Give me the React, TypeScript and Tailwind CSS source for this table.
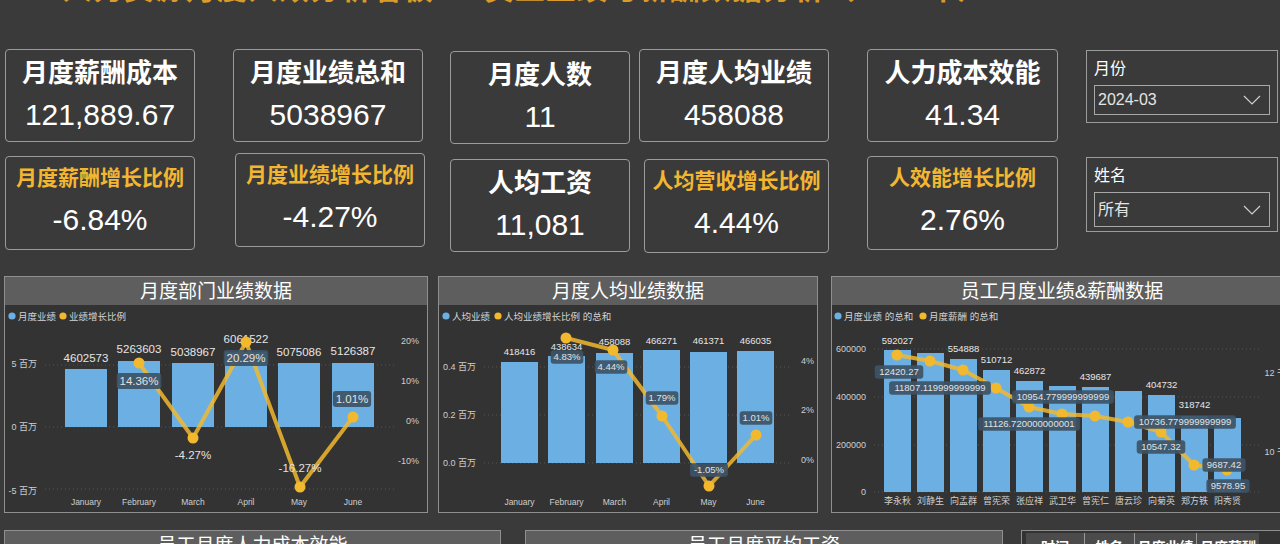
import React from "react"

const BLUE = "#6cb0e3"
const GOLD = "#f2b92f"
const BOX = "#3d5266"

type Bar = { label: string; x: number; top: number; value?: string; vy?: number }
type Pt = [number, number]
type TagT = { x: number; y: number; text: string; box?: boolean }

// small dark label box used by the power-bi style data labels
function Tag({ x, y, text, box = true, size = 11 }: TagT & { size?: number }) {
  const w = text.length * size * 0.56 + 6
  return (
    <g>
      {box && <rect x={x - w / 2} y={y - size * 0.7} width={w} height={size * 1.4} rx={3} fill={BOX} fillOpacity={0.92} />}
      <text x={x} y={y + size * 0.36} textAnchor="middle" fontSize={size} fill="#e2e2e2">
        {text}
      </text>
    </g>
  )
}

function Legend({ x, items }: { x: number[]; items: string[] }) {
  return (
    <g>
      {items.map((t, i) => (
        <g key={t}>
          <circle cx={x[i]} cy={316} r={3.6} fill={i === 0 ? BLUE : GOLD} />
          <text x={x[i] + 6} y={319.5} fontSize={9.5} fill="#d4d4d4">
            {t}
          </text>
        </g>
      ))}
    </g>
  )
}

function Combo({
  vx,
  w,
  bars,
  barW,
  base,
  valueSize,
  points,
  tags,
  grid,
  left,
  leftX,
  right,
  rightX,
  xLabelY,
  xSize,
  legendX,
  legend,
}: {
  vx: number
  w: number
  bars: Bar[]
  barW: number
  base: number
  valueSize: number
  points: Pt[]
  tags: (TagT & { size?: number })[]
  grid: number[]
  left: [string, number][]
  leftX: number
  right: [string, number][]
  rightX: number
  xLabelY: number
  xSize: number
  legendX: number[]
  legend: string[]
}) {
  return (
    <svg width={w} height={207} viewBox={`${vx} 305 ${w} 207`} className="block">
      <Legend x={legendX} items={legend} />
      {grid.map((g) => (
        <line key={g} x1={leftX + 8} x2={rightX - 24} y1={g} y2={g} stroke="#555" strokeDasharray="1 3" />
      ))}
      {left.map(([t, y]) => (
        <text key={t} x={leftX} y={y + 3} textAnchor="end" fontSize={9} fill="#cfcfcf">
          {t}
        </text>
      ))}
      {right.map(([t, y]) => (
        <text key={t} x={rightX} y={y + 3} textAnchor="end" fontSize={9} fill="#cfcfcf">
          {t}
        </text>
      ))}
      {bars.map((b) => (
        <rect key={b.label} x={b.x} y={b.top} width={barW} height={base - b.top} fill={BLUE} />
      ))}
      {bars.map((b) =>
        b.value ? (
          <text key={b.label} x={b.x + barW / 2} y={(b.vy ?? 0) + valueSize * 0.36} textAnchor="middle" fontSize={valueSize} fill="#e6e6e6">
            {b.value}
          </text>
        ) : null
      )}
      {bars.map((b) => (
        <text key={b.label} x={b.x + barW / 2} y={xLabelY + 3} textAnchor="middle" fontSize={xSize} fill="#cfcfcf">
          {b.label}
        </text>
      ))}
      <polyline
        points={points.map((p) => p.join(",")).join(" ")}
        fill="none"
        stroke={GOLD}
        strokeOpacity={0.85}
        strokeWidth={4}
        strokeLinejoin="round"
      />
      {points.map((p, i) => (
        <circle key={i} cx={p[0]} cy={p[1]} r={5.5} fill={GOLD} />
      ))}
      {tags.map((t, i) => (
        <Tag key={i} {...t} />
      ))}
    </svg>
  )
}

function Panel({ title, className, children }: { title: string; className: string; children?: React.ReactNode }) {
  return (
    <div className={`shrink-0 border border-[#8f8f8f] bg-[#333333] ${className}`}>
      <div className="flex h-[28px] items-center justify-center bg-[#5e5e5e] text-[19px] leading-none text-white">{title}</div>
      {children}
    </div>
  )
}

function StatCard({ title, value, accent, className }: { title: string; value: string; accent?: boolean; className: string }) {
  return (
    <div className={`flex flex-col items-center rounded-[4px] border border-[#9b9b9b] ${className}`}>
      {accent ? (
        <div className="mt-[6px] text-[21px] font-bold leading-[30px] text-[#f2b631]">{title}</div>
      ) : (
        <div className="mt-[8px] text-[26px] font-bold leading-[30px] text-white">{title}</div>
      )}
      <div className="mt-[9px] text-[30px] leading-[36px] text-white">{value}</div>
    </div>
  )
}

function Slicer({ label, value, className, boxClass }: { label: string; value: string; className: string; boxClass: string }) {
  return (
    <div className={`border border-[#9b9b9b] px-[7px] ${className}`}>
      <div className="mt-[7px] text-[16px] leading-[22px] text-white">{label}</div>
      <div className={`mt-[5px] flex items-center justify-between border border-[#a8a8a8] pl-[3px] pr-[8px] text-[16px] text-[#e4e4e4] ${boxClass}`}>
        <span>{value}</span>
        <svg width="18" height="10" viewBox="0 0 18 10">
          <path d="M1 1 L9 9 L17 1" fill="none" stroke="#cfcfcf" strokeWidth="1.2" />
        </svg>
      </div>
    </div>
  )
}

const months = ["January", "February", "March", "April", "May", "June"]

export default function App() {
  return (
    <div className="h-[544px] w-[1280px] overflow-hidden bg-[#3a3a3a] font-['Liberation_Sans','Noto_Sans_CJK_SC',sans-serif] text-white">
      {/* banner title, scrolled mostly out of view */}
      <div className="h-[6px] overflow-hidden pl-[62px]">
        <div className="-mt-[26px] whitespace-nowrap text-[30px] font-bold leading-[30px] tracking-[1px] text-[#d99c2b]">
          人力资源月度人效分析看板 — 员工业绩与薪酬数据分析（2024年）
        </div>
      </div>

      <div className="mt-[43px] flex h-[227px] items-start">
        <div className="ml-[5px] w-[190px] shrink-0">
          <StatCard title="月度薪酬成本" value="121,889.67" className="h-[93px]" />
          <StatCard title="月度薪酬增长比例" value="-6.84%" accent className="mt-[14px] h-[94px]" />
        </div>
        <div className="ml-[38px] w-[192px] shrink-0">
          <StatCard title="月度业绩总和" value="5038967" className="h-[93px] w-[190px]" />
          <StatCard title="月度业绩增长比例" value="-4.27%" accent className="ml-[2px] mt-[11px] h-[94px] w-[190px]" />
        </div>
        <div className="ml-[25px] w-[180px] shrink-0 pt-[2px]">
          <StatCard title="月度人数" value="11" className="h-[93px]" />
          <StatCard title="人均工资" value="11,081" className="mt-[15px] h-[93px]" />
        </div>
        <div className="ml-[9px] w-[190px] shrink-0">
          <StatCard title="月度人均业绩" value="458088" className="h-[93px]" />
          <StatCard title="人均营收增长比例" value="4.44%" accent className="ml-[5px] mt-[17px] h-[94px] w-[185px]" />
        </div>
        <div className="ml-[38px] w-[191px] shrink-0">
          <StatCard title="人力成本效能" value="41.34" className="h-[93px]" />
          <StatCard title="人效能增长比例" value="2.76%" accent className="mt-[14px] h-[94px]" />
        </div>
        <div className="ml-[28px] w-[192px] shrink-0">
          <Slicer label="月份" value="2024-03" className="mt-[1px] h-[73px]" boxClass="h-[30px]" />
          <Slicer label="姓名" value="所有" className="mt-[34px] h-[75px]" boxClass="h-[35px]" />
        </div>
      </div>

      <div className="flex h-[237px]">
        <Panel title="月度部门业绩数据" className="ml-[4px] w-[424px]">
          <Combo
            vx={5}
            w={422}
            barW={42}
            base={427}
            valueSize={11.5}
            bars={[
              { label: months[0], x: 65, top: 369, value: "4602573", vy: 358 },
              { label: months[1], x: 118, top: 361, value: "5263603", vy: 349 },
              { label: months[2], x: 172, top: 363, value: "5038967", vy: 352 },
              { label: months[3], x: 225, top: 352, value: "6061522", vy: 339 },
              { label: months[4], x: 278, top: 363, value: "5075086", vy: 352 },
              { label: months[5], x: 332, top: 363, value: "5126387", vy: 351 },
            ]}
            points={[
              [139, 363],
              [193, 438],
              [246, 342],
              [300, 487],
              [353, 417],
            ]}
            tags={[
              { x: 139, y: 381, text: "14.36%", size: 11.5 },
              { x: 193, y: 455, text: "-4.27%", box: false, size: 11.5 },
              { x: 246, y: 358, text: "20.29%", size: 11.5 },
              { x: 300, y: 468, text: "-16.27%", box: false, size: 11.5 },
              { x: 352, y: 399, text: "1.01%", size: 11.5 },
            ]}
            grid={[365, 427, 489]}
            left={[
              ["5 百万", 364],
              ["0 百万", 427],
              ["-5 百万", 491],
            ]}
            leftX={37}
            right={[
              ["20%", 341],
              ["10%", 381],
              ["0%", 421],
              ["-10%", 461],
            ]}
            rightX={419}
            xLabelY={502}
            xSize={8.5}
            legendX={[12, 63]}
            legend={["月度业绩", "业绩增长比例"]}
          />
        </Panel>

        <Panel title="月度人均业绩数据" className="ml-[10px] w-[380px]">
          <Combo
            vx={439}
            w={378}
            barW={37}
            base={463}
            valueSize={9.5}
            bars={[
              { label: months[0], x: 501, top: 362, value: "418416", vy: 352 },
              { label: months[1], x: 548, top: 356, value: "438634", vy: 347 },
              { label: months[2], x: 596, top: 353, value: "458088", vy: 342 },
              { label: months[3], x: 643, top: 350, value: "466271", vy: 341 },
              { label: months[4], x: 690, top: 352, value: "461371", vy: 341 },
              { label: months[5], x: 737, top: 351, value: "466035", vy: 341 },
            ]}
            points={[
              [566, 338],
              [613, 350],
              [662, 416],
              [709, 486],
              [756, 435],
            ]}
            tags={[
              { x: 567, y: 357, text: "4.83%", size: 9.5 },
              { x: 611, y: 367, text: "4.44%", size: 9.5 },
              { x: 662, y: 398, text: "1.79%", size: 9.5 },
              { x: 709, y: 470, text: "-1.05%", size: 9.5 },
              { x: 756, y: 418, text: "1.01%", size: 9.5 },
            ]}
            grid={[367, 415, 463]}
            left={[
              ["0.4 百万", 367],
              ["0.2 百万", 415],
              ["0.0 百万", 463],
            ]}
            leftX={476}
            right={[
              ["4%", 361],
              ["2%", 410],
              ["0%", 460],
            ]}
            rightX={814}
            xLabelY={502}
            xSize={8.5}
            legendX={[446, 498]}
            legend={["人均业绩", "人均业绩增长比例 的总和"]}
          />
        </Panel>

        <Panel title="员工月度业绩&薪酬数据" className="ml-[13px] w-[462px]">
          <Combo
            vx={832}
            w={460}
            barW={27}
            base={492}
            valueSize={9.5}
            bars={[
              { label: "李永秋", x: 884, top: 350, value: "592027", vy: 341 },
              { label: "刘静生", x: 917, top: 353 },
              { label: "向孟群", x: 950, top: 359, value: "554888", vy: 349 },
              { label: "曾宪荣", x: 983, top: 370, value: "510712", vy: 360 },
              { label: "张应祥", x: 1016, top: 381, value: "462872", vy: 371 },
              { label: "武卫华", x: 1049, top: 386 },
              { label: "曾宪仁", x: 1082, top: 387, value: "439687", vy: 377 },
              { label: "唐云珍", x: 1115, top: 391 },
              { label: "向菊英", x: 1148, top: 395, value: "404732", vy: 385 },
              { label: "郑方铁", x: 1181, top: 416, value: "318742", vy: 405 },
              { label: "阳秀贤", x: 1214, top: 418 },
            ]}
            points={[
              [897, 355],
              [930, 361],
              [963, 370],
              [996, 388],
              [1029, 407],
              [1062, 414],
              [1095, 416],
              [1128, 422],
              [1161, 432],
              [1194, 465],
              [1227, 470],
            ]}
            tags={[
              { x: 899, y: 372, text: "12420.27", size: 9.5 },
              { x: 940, y: 388, text: "11807.119999999999", size: 9.5 },
              { x: 1063, y: 397, text: "10954.779999999999", size: 9.5 },
              { x: 1029, y: 424, text: "11126.720000000001", size: 9.5 },
              { x: 1185, y: 422, text: "10736.779999999999", size: 9.5 },
              { x: 1161, y: 447, text: "10547.32", size: 9.5 },
              { x: 1224, y: 465, text: "9687.42", size: 9.5 },
              { x: 1228, y: 486, text: "9578.95", size: 9.5 },
            ]}
            grid={[349, 397, 445, 492]}
            left={[
              ["600000", 349],
              ["400000", 397],
              ["200000", 445],
              ["0", 492],
            ]}
            leftX={866}
            right={[
              ["12 千", 373],
              ["10 千", 452],
            ]}
            rightX={1286}
            xLabelY={501}
            xSize={9}
            legendX={[838, 923]}
            legend={["月度业绩 的总和", "月度薪酬 的总和"]}
          />
        </Panel>
      </div>

      <div className="mt-[17px] flex">
        <Panel title="员工月度人力成本效能" className="ml-[4px] h-[40px] w-[497px]" />
        <Panel title="员工月度平均工资" className="ml-[24px] h-[40px] w-[478px]" />
        <div className="ml-[18px] h-[40px] w-[270px] shrink-0 border border-[#8f8f8f] bg-[#333333] pl-[4px] pt-[2px]">
          <div className="flex h-[28px] text-[14px] font-bold text-white">
            <div className="flex w-[59px] items-center justify-center border-r border-[#9a9a9a] bg-[#4b4b4b]">时间</div>
            <div className="flex w-[50px] items-center justify-center border-r border-[#9a9a9a] bg-[#4b4b4b]">姓名</div>
            <div className="flex w-[62px] items-center justify-center border-r border-[#9a9a9a] bg-[#4b4b4b]">月度业绩</div>
            <div className="flex w-[62px] items-center justify-center bg-[#4b4b4b]">月度薪酬</div>
          </div>
        </div>
      </div>
    </div>
  )
}
